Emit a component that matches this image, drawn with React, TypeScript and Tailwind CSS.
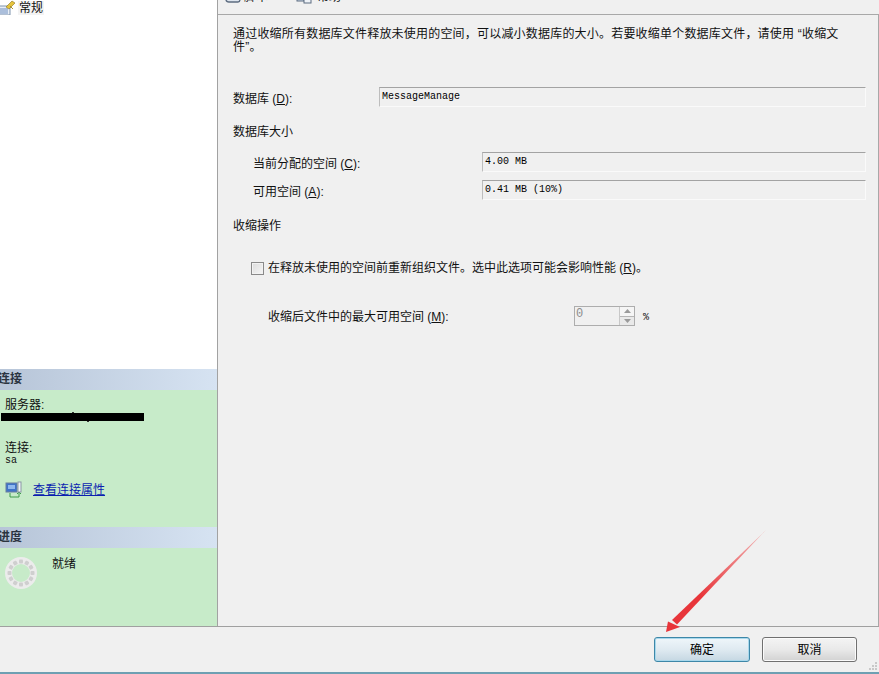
const cjk = "font-['Liberation_Sans','Noto_Sans_CJK_SC',sans-serif]";
const mono = "font-['Liberation_Mono','Noto_Sans_CJK_SC',monospace]";

function Key({ k }: { k: string }) {
  return (
    <>
      {' ('}
      <span className="underline">{k}</span>
      {')'}
    </>
  );
}

function ReadOnlyField({ value, className }: { value: string; className: string }) {
  return (
    <div
      className={`flex h-[20px] items-center border border-t-[#a3a3a3] border-l-[#bdbdbd] border-r-[#fafafa] border-b-[#fafafa] pl-[2px] text-[10px] text-black ${mono} ${className}`}
    >
      {value}
    </div>
  );
}

function SectionHeader({ title }: { title: string }) {
  return (
    <div className="flex h-[21px] items-center overflow-hidden bg-linear-to-r from-[#b7c5d8] to-[#d6e3f2] pb-[2px] text-[12px] font-bold text-[#2b3440]">
      <span className="-ml-[2px]">{title}</span>
    </div>
  );
}

function PropertiesIcon() {
  return (
    <svg width="15" height="15" viewBox="0 0 15 15" className="shrink-0">
      <rect x="-2" y="6" width="12" height="9" fill="#e8eef6" stroke="#7f93ad" />
      <path d="M0 9h8M0 11h8M0 13h8" stroke="#6f8fc0" />
      <path d="M6 7 12 1l3 2-6 6z" fill="#e6c43c" stroke="#8c7420" strokeWidth="0.6" />
      <path d="M10 6l3 3" stroke="#a9932f" />
    </svg>
  );
}

function ConnectionIcon() {
  return (
    <svg width="17" height="17" viewBox="0 0 17 17" className="shrink-0">
      <path d="M5 12v4h9v-4" fill="none" stroke="#3f9a4c" />
      <path d="M12 13l2-2 2 2" fill="none" stroke="#3f9a4c" />
      <rect x="1" y="2" width="11" height="9" fill="#3f73c8" stroke="#6a7f9e" />
      <rect x="3" y="4" width="7" height="4" fill="#8fb8ee" />
      <rect x="13" y="1" width="3" height="10" fill="#f0f3f6" stroke="#8b97a6" />
    </svg>
  );
}

function ProgressRing() {
  const spokes = Array.from({ length: 12 }, (_, i) => i * 30);
  return (
    <svg width="32" height="32" viewBox="0 0 32 32" className="shrink-0">
      <circle cx="16" cy="16" r="12.5" fill="none" stroke="#ececec" strokeWidth="7" />
      {spokes.map((a) => (
        <rect key={a} x="14" y="2.5" width="4" height="4" rx="1" fill="#cfcfcf" transform={`rotate(${a} 16 16)`} />
      ))}
    </svg>
  );
}

function TabIcon({ kind }: { kind: 'script' | 'help' }) {
  return (
    <svg width="16" height="14" viewBox="0 0 16 14">
      {kind === 'script' ? (
        <path d="M1 1v8q0 3 3 3h9q2 0 2-3V1" fill="#dfe6ef" stroke="#5d6c80" strokeWidth="1.4" />
      ) : (
        <>
          <rect x="1" y="0" width="7" height="11" fill="#c9d6e8" stroke="#5d6c80" />
          <rect x="8" y="0" width="7" height="13" fill="#eef2f7" stroke="#5d6c80" />
        </>
      )}
    </svg>
  );
}

function Button({ label, primary }: { label: string; primary?: boolean }) {
  return (
    <button
      type="button"
      className={`h-[25px] rounded-[3px] border bg-linear-to-b text-[12px] text-black ${
        primary
          ? 'w-[96px] border-[#3d87a8] from-[#eff6fa] via-[#dfeaf1] to-[#c5d7e2] shadow-[inset_0_0_0_1px_#a8d8ec]'
          : 'w-[95px] border-[#707070] from-[#f4f4f4] via-[#e9e9e9] to-[#d2d2d2] shadow-[inset_0_0_0_1px_#fbfbfb]'
      }`}
    >
      {label}
    </button>
  );
}

export default function App() {
  return (
    <div className={`relative flex h-[674px] w-[879px] flex-col overflow-hidden bg-[#f0f0f0] text-[12px] leading-[14px] text-[#111] ${cjk}`}>
      <div className="flex h-[626px]">
        {/* left column */}
        <aside className="flex w-[218px] shrink-0 flex-col border-r border-[#a2a2a2]">
          <div className="h-[369px] bg-white">
            <div className="flex items-center gap-[3px]">
              <PropertiesIcon />
              <span className="mt-[1px] bg-[#f3f3f3] px-[1px]">常规</span>
            </div>
          </div>

          <SectionHeader title="连接" />
          <div className="h-[137px] bg-[#c7ebc9] pt-[8px]">
            <div className="pl-[5px] leading-[15px]">服务器:</div>
            <div className="relative ml-[1px] h-[8px] w-[143px] bg-black">
              <div className="absolute -top-[1px] left-[71px] h-[1px] w-[2px] bg-[#333]" />
              <div className="absolute -bottom-[1px] left-[86px] h-[1px] w-[2px] bg-[#333]" />
            </div>
            <div className="mt-[20px] pl-[5px]">连接:</div>
            <div className={`pl-[5px] text-[10px] leading-[12px] ${mono}`}>sa</div>
            <div className="mt-[14px] flex items-center gap-[11px] pl-[5px]">
              <ConnectionIcon />
              <a href="#" className="text-[#0b1fb0] underline">查看连接属性</a>
            </div>
          </div>

          <SectionHeader title="进度" />
          <div className="flex flex-1 gap-[15px] bg-[#c7ebc9] pt-[9px] pl-[5px]">
            <ProgressRing />
            <span>就绪</span>
          </div>
        </aside>

        {/* right column */}
        <main className="flex flex-1 flex-col">
          <div className="h-[14px] overflow-hidden">
            <div className="-mt-[10px] flex h-[14px] items-center pl-[7px]">
              <TabIcon kind="script" />
              <span className="ml-[3px] w-[52px]">脚本</span>
              <TabIcon kind="help" />
              <span className="ml-[5px]">帮助</span>
            </div>
          </div>
          <div className="flex-1 border-t border-r border-[#a8a8a8] pl-[15px]">
            <p className="mt-[13px] h-[27px] leading-[13px] tracking-[0.2px]">
              通过收缩所有数据库文件释放未使用的空间，可以减小数据库的大小。若要收缩单个数据库文件，请使用 “收缩文
              <br />
              件”。
            </p>
            <div className="mt-[32px] flex h-[20px] items-center">
              <span className="w-[146px] pt-[3px]">数据库<Key k="D" />:</span>
              <ReadOnlyField value="MessageManage" className="w-[487px]" />
            </div>
            <div className="mt-[18px] h-[14px]">数据库大小</div>
            <div className="mt-[13px] flex h-[20px] items-center pl-[20px]">
              <span className="w-[229px] pt-[3px]">当前分配的空间<Key k="C" />:</span>
              <ReadOnlyField value="4.00 MB" className="w-[384px] pb-[1px]" />
            </div>
            <div className="mt-[8px] flex h-[20px] items-center pl-[20px]">
              <span className="w-[229px] pt-[3px]">可用空间<Key k="A" />:</span>
              <ReadOnlyField value="0.41 MB (10%)" className="w-[384px] pb-[1px]" />
            </div>
            <div className="mt-[19px] h-[14px]">收缩操作</div>
            <div className="mt-[28px] flex h-[14px] items-center gap-[4px] pl-[18px]">
              <span className="h-[13px] w-[13px] border border-[#8a8a8a] bg-linear-to-br from-[#dcdcdc] to-[#f6f6f6] shadow-[inset_0_0_0_1px_#f2f2f2]" />
              <span>在释放未使用的空间前重新组织文件。选中此选项可能会影响性能<Key k="R" />。</span>
            </div>
            <div className="mt-[31px] flex h-[20px] items-center pl-[35px]">
              <span className="w-[306px] pt-[2px]">收缩后文件中的最大可用空间<Key k="M" />:</span>
              <div className="flex h-[20px] w-[61px] border border-[#adadad] bg-[#f0f0f0]">
                <span className={`flex-1 pl-[1px] text-[12px] leading-[14px] text-[#8d8d8d] ${mono}`}>0</span>
                <div className="flex w-[15px] flex-col border-l border-[#c8c8c8] text-[#9a9a9a]">
                  <div className="flex flex-1 items-center justify-center border-b border-[#b5b5b5] bg-[#f5f5f5]">
                    <svg width="7" height="4" viewBox="0 0 7 4"><path d="M3.5 0 7 4H0z" fill="currentColor" /></svg>
                  </div>
                  <div className="flex flex-1 items-center justify-center bg-[#e9e9e9]">
                    <svg width="7" height="4" viewBox="0 0 7 4"><path d="M0 0h7L3.5 4z" fill="currentColor" /></svg>
                  </div>
                </div>
              </div>
              <span className={`ml-[8px] pt-[3px] text-[10px] ${mono}`}>%</span>
            </div>
          </div>
        </main>
      </div>

      {/* footer buttons */}
      <footer className="flex h-[46px] items-start justify-end gap-[12px] border-t border-[#a0a0a0] pt-[10px] pr-[22px]">
        <Button label="确定" primary />
        <Button label="取消" />
      </footer>
      <div className="h-[2px] bg-[#6e9fb2]" />

      {/* grip */}
      <svg width="10" height="10" viewBox="0 0 10 10" className="absolute right-[1px] bottom-[3px]">
        <path d="M7 1h2v2H7zM7 4h2v2H7zM4 4h2v2H4zM7 7h2v2H7zM4 7h2v2H4zM1 7h2v2H1z" fill="#c8c8c8" />
      </svg>

      {/* annotation arrow */}
      <svg width="879" height="674" viewBox="0 0 879 674" className="pointer-events-none absolute top-0 left-0">
        <defs>
          <linearGradient id="arrowFade" x1="766" y1="530" x2="700" y2="596" gradientUnits="userSpaceOnUse">
            <stop offset="0" stopColor="#f2b8b8" />
            <stop offset="1" stopColor="#e8353a" />
          </linearGradient>
        </defs>
        <path d="M766 530 672 620 677 624.5z" fill="url(#arrowFade)" />
        <path d="M666 632 668 621.5 680 627z" fill="#e8353a" />
      </svg>
    </div>
  );
}
